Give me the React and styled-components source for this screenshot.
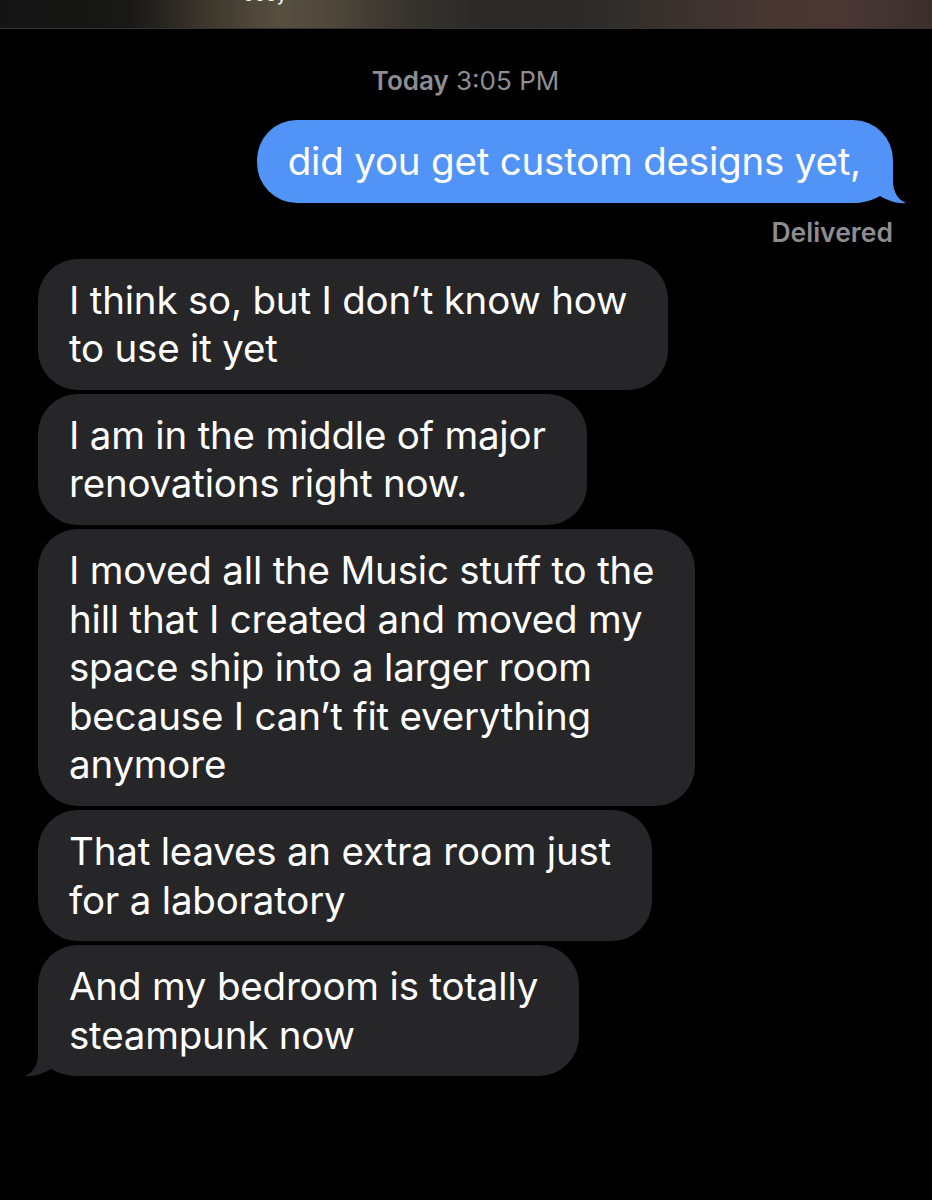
import React from "react";
import styled, { createGlobalStyle } from "styled-components";

const GlobalStyle = createGlobalStyle`
  html, body {
    margin: 0;
    padding: 0;
    background: #000;
  }
  * { box-sizing: border-box; }
`;

const Page = styled.div`
  min-height: 1200px;
  background: #000;
  font-family: Inter, "Noto Sans", "Liberation Sans", sans-serif;
  -webkit-font-smoothing: antialiased;
`;

const Header = styled.header`
  height: 29px;
  overflow: hidden;
  display: flex;
  align-items: flex-start;
  padding-left: 244px;
  border-bottom: 1px solid #34332f;
  background: linear-gradient(
    90deg,
    #141414 0%,
    #181817 14%,
    #3c362c 22%,
    #575041 30%,
    #4d473a 36%,
    #36332d 44%,
    #2a2927 52%,
    #2b2a28 62%,
    #35302c 70%,
    #473632 82%,
    #4a3734 90%,
    #3b2f2d 100%
  );
`;

const HeaderTitle = styled.span`
  margin-top: -15px;
  font-size: 17px;
  font-weight: 500;
  letter-spacing: 1px;
  color: #f2f2f2;
  line-height: 20px;
`;

const Thread = styled.main`
  display: flex;
  flex-direction: column;
  padding: 36px 39px 0 38px;
`;

const Stamp = styled.div`
  align-self: center;
  font-size: 26px;
  line-height: 32px;
  color: #8d8d92;
  font-weight: 400;
  margin-bottom: 23px;

  b {
    font-weight: 600;
  }
`;

const Row = styled.div`
  display: flex;
  justify-content: ${(p) => (p.$sent ? "flex-end" : "flex-start")};
  margin-bottom: 4px;
`;

const Bubble = styled.div`
  position: relative;
  z-index: 0;
  white-space: nowrap;
  font-size: 38.5px;
  line-height: 48.6px;
  letter-spacing: -0.2px;
  color: #fff;
  border-radius: 40px;
  background: ${(p) => (p.$sent ? "#5193f6" : "#262629")};
  padding: ${(p) => (p.$sent ? "17px 32px 17px 31px" : "17px 41px 17px 31px")};
`;

const TailSvg = styled.svg`
  position: absolute;
  z-index: -1;
  bottom: 0;
  width: 53px;
  height: 40px;
  overflow: visible;
  ${(p) =>
    p.$sent
      ? "right: -13px;"
      : "left: -13px; transform: scaleX(-1);"}
`;

const Delivered = styled.div`
  align-self: flex-end;
  font-size: 26.5px;
  line-height: 30px;
  font-weight: 600;
  color: #8d8d92;
  margin-top: 10px;
  margin-bottom: 12px;
`;

function Tail({ sent }) {
  return (
    <TailSvg $sent={sent} viewBox="0 0 53 40" aria-hidden="true">
      <path
        d="M0,0 H40 V18 C40,30 46,37 53,40 C46,41 36,38.5 27,33 C20,37 11,40 0,40 Z"
        fill={sent ? "#5193f6" : "#262629"}
      />
    </TailSvg>
  );
}

function Message({ sent, tail, lines }) {
  return (
    <Row $sent={sent}>
      <Bubble $sent={sent}>
        {tail && <Tail sent={sent} />}
        {lines.map((l, i) => (
          <React.Fragment key={i}>
            {i > 0 && <br />}
            {l}
          </React.Fragment>
        ))}
      </Bubble>
    </Row>
  );
}

const received = [
  ["I think so, but I don\u2019t know how", "to use it yet"],
  ["I am in the middle of major", "renovations right now."],
  [
    "I moved all the Music stuff to the",
    "hill that I created and moved my",
    "space ship into a larger room",
    "because I can\u2019t fit everything",
    "anymore",
  ],
  ["That leaves an extra room just", "for a laboratory"],
  ["And my bedroom is totally", "steampunk now"],
];

export default function App() {
  return (
    <Page>
      <GlobalStyle />
      <Header>
        <HeaderTitle>Joey</HeaderTitle>
      </Header>
      <Thread>
        <Stamp>
          <b>Today</b> 3:05 PM
        </Stamp>
        <Message sent tail lines={["did you get custom designs yet,"]} />
        <Delivered>Delivered</Delivered>
        {received.map((lines, i) => (
          <Message key={i} lines={lines} tail={i === received.length - 1} />
        ))}
      </Thread>
    </Page>
  );
}
